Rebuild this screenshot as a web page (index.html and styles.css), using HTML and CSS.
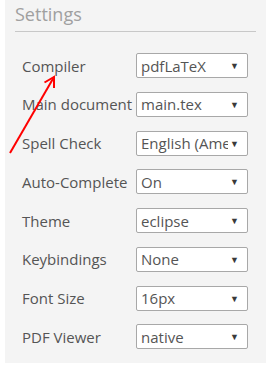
FILE: index.html
```html
<!DOCTYPE html>
<html lang="en">
<head>
    <meta charset="UTF-8">
    <meta name="viewport" content="width=device-width, initial-scale=1.0">
    <title>Settings</title>
    <link rel="stylesheet" href="styles.css">
</head>
<body>
    <div class="panel">
        <h3 class="panel-title">Settings</h3>
        <form class="settings">
            <label class="label">Compiler</label>
            <div class="select"><span class="value">pdfLaTeX</span><span class="caret">▼</span></div>

            <label class="label">Main document</label>
            <div class="select"><span class="value">main.tex</span><span class="caret">▼</span></div>

            <label class="label">Spell Check</label>
            <div class="select"><span class="value">English (American)</span><span class="caret">▼</span></div>

            <label class="label">Auto-Complete</label>
            <div class="select"><span class="value">On</span><span class="caret">▼</span></div>

            <label class="label">Theme</label>
            <div class="select"><span class="value">eclipse</span><span class="caret">▼</span></div>

            <label class="label">Keybindings</label>
            <div class="select"><span class="value">None</span><span class="caret">▼</span></div>

            <label class="label">Font Size</label>
            <div class="select"><span class="value">16px</span><span class="caret">▼</span></div>

            <label class="label">PDF Viewer</label>
            <div class="select"><span class="value">native</span><span class="caret">▼</span></div>
        </form>

        <!-- annotation arrow pointing at the compiler row -->
        <svg class="annotation" width="70" height="170" viewBox="0 0 70 170">
            <line x1="10" y1="153" x2="54" y2="77" stroke="#ff0000" stroke-width="2"/>
            <polyline points="44.5,82.5 54,77 54,88" fill="none" stroke="#ff0000" stroke-width="2"/>
        </svg>
    </div>
</body>
</html>
```

FILE: styles.css
```css
* {
    margin: 0;
    padding: 0;
    box-sizing: border-box;
}

body {
    font-family: "Open Sans", Arial, sans-serif;
    background: #fff;
}

.panel {
    position: relative;
    width: 261px;
    height: 363px;
    margin-left: 5px;
    padding: 2px 10px 0;
    background: #f4f4f4;
}

.panel-title {
    font-size: 18px;
    font-weight: normal;
    color: #a0a0a0;
    padding-bottom: 5px;
    border-bottom: 1px solid #c8c8c8;
}

.settings {
    display: grid;
    grid-template-columns: 114px 112px;
    row-gap: 13.75px;
    align-items: center;
    margin-top: 21px;
    padding-left: 7px;
}

.label {
    font-size: 15px;
    color: #555;
    white-space: nowrap;
}

.select {
    display: flex;
    align-items: center;
    height: 25px;
    padding: 0 8px 0 4px;
    background: #fff;
    border: 1px solid #a8a8a8;
    border-radius: 2px;
    font-size: 15px;
    color: #555;
}

.value {
    flex: 1;
    overflow: hidden;
    white-space: nowrap;
}

.caret {
    margin-left: 2px;
    font-size: 9px;
    color: #3a3a3a;
}

.annotation {
    position: absolute;
    left: -5px;
    top: 0;
}
```
